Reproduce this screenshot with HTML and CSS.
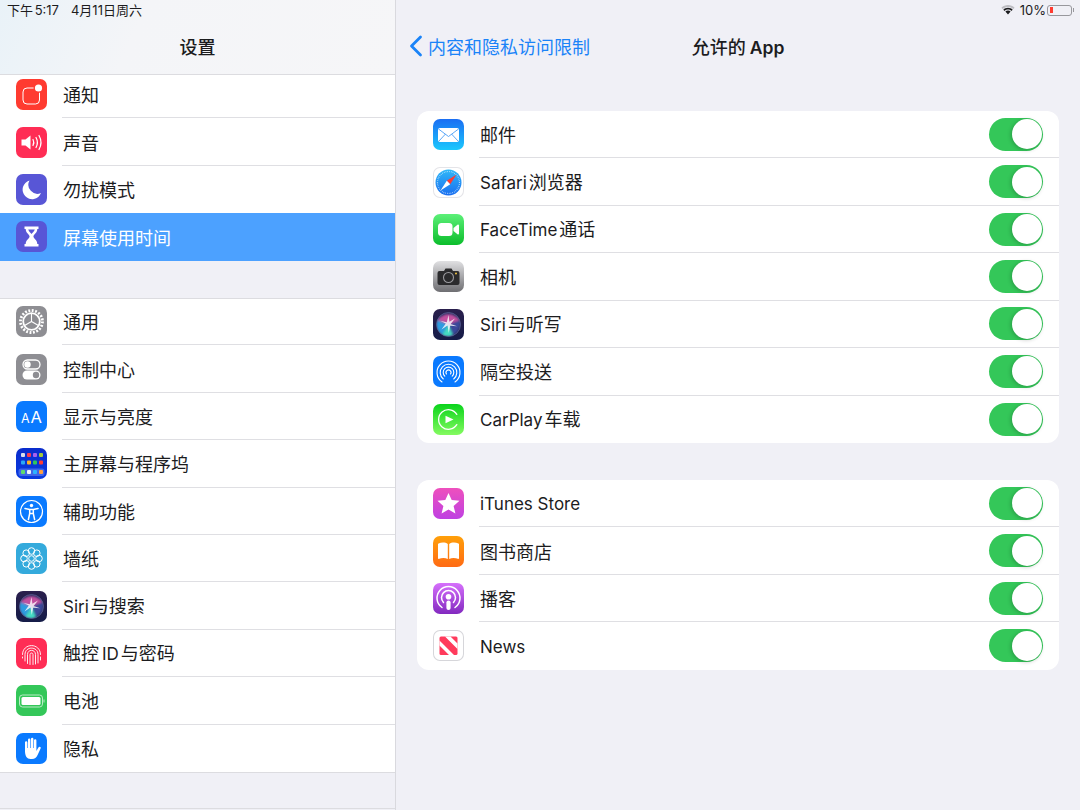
FILE: index.html
```html
<!DOCTYPE html>
<html lang="zh-CN">
<head>
<meta charset="utf-8">
<title>允许的 App</title>
<link rel="stylesheet" href="styles.css">
</head>
<body>
<svg class="defs" aria-hidden="true">
  <defs>
    <filter id="soft" x="-20%" y="-20%" width="140%" height="140%"><feGaussianBlur stdDeviation="1"/></filter>
    <filter id="soft-star" x="-20%" y="-20%" width="140%" height="140%"><feGaussianBlur stdDeviation=".35"/></filter>
    <linearGradient id="saf" x1="0" y1="0" x2="0" y2="1"><stop offset="0" stop-color="#2fb8f8"/><stop offset="1" stop-color="#1a6ef0"/></linearGradient>
    <clipPath id="orb"><circle cx="15.5" cy="15.5" r="12"/></clipPath>
    <symbol id="siri" viewBox="0 0 31 31">
      <circle cx="15.5" cy="15.5" r="12" fill="#2a2f62"/>
      <g clip-path="url(#orb)">
        <g filter="url(#soft)">
          <path d="M4 11Q15.500-.5 27 11L15.500 15.500z" fill="#c2509f"/>
          <path d="M4 11Q1 20 9 26l6.500-10.500z" fill="#2f9be0"/>
          <path d="M9 26q6 3 11 0l-4.500-10.500z" fill="#45dcc4"/>
          <path d="M27 11q2 9-7 15l-4.500-10.500z" fill="#3a4a9a"/>
        </g>
      </g>
      <path d="M15.500 6l.9 6.800L22 9.500l-4.300 5.500 6.500 2.300-7-.5L15.800 24l-1.300-7.500-6 4 4.300-6L7.500 12l6.300 1.300z" fill="#fff" opacity=".8" filter="url(#soft-star)"/>
      <circle cx="15.500" cy="15.500" r="12" fill="none" stroke="#6a70a5" stroke-width=".6"/>
    </symbol>
  </defs>
</svg>
<div class="app">
  <aside class="sidebar">
    <header class="side-head">
      <div class="status status-left"><span class="lt-s">下午 5:17</span><span class="lt-s">4月11日周六</span></div>
      <h1 class="side-title">设置</h1>
    </header>
    <div class="side-clip">
      <ul class="side-list side-list-top">
        <li class="row"><span class="icon bg-red"><svg viewBox="0 0 31 31"><rect x="7" y="9" width="16.500" height="16" rx="4" fill="none" stroke="#fff" stroke-width="1"/><circle cx="22.500" cy="9" r="5" fill="#ff3b30"/><circle cx="22.500" cy="9" r="3.600" fill="#fff"/></svg></span><span class="body"><span class="label">通知</span></span></li>
        <li class="row"><span class="icon bg-pink"><svg viewBox="0 0 31 31"><path d="M5.500 12.500h4l5-4v14l-5-4h-4z" fill="#fff"/><path d="M17 12.500q1.600 3 0 6M20 10.500q2.800 5 0 10M23 8.500q4 7 0 14" fill="none" stroke="#fff" stroke-width="1.200" stroke-linecap="round"/></svg></span><span class="body"><span class="label">声音</span></span></li>
        <li class="row row-last"><span class="icon bg-indigo"><svg viewBox="0 0 31 31"><path d="M13.500 6.500a9.500 9.500 0 1 0 11.500 12.500 9 9 0 0 1-11.500-12.500z" fill="#fff"/></svg></span><span class="body"><span class="label">勿扰模式</span></span></li>
        <li class="row row-last row-active"><span class="icon bg-indigo"><svg viewBox="0 0 31 31"><path d="M8.500 5.500h14v2.500h-1.200c0 4-3.300 5-3.900 7.500.6 2.500 3.900 3.500 3.900 7.500h1.200v2.500h-14V23h1.200c0-4 3.300-5 3.900-7.500C13 13 9.700 12 9.700 8H8.500z" fill="#fff"/><path d="M12.200 8.500h6.600c-.5 2-2.300 3-3.300 4.500-1-1.500-2.800-2.500-3.300-4.500z" fill="#5856d6"/></svg></span><span class="body"><span class="label">屏幕使用时间</span></span></li>
      </ul>
    </div>
    <ul class="side-list side-group">
      <li class="row"><span class="icon bg-gray"><svg viewBox="0 0 31 31"><circle cx="15.500" cy="15.500" r="11" fill="none" stroke="#fff" stroke-width="2.800" stroke-dasharray="1.900 1.550"/><circle cx="15.500" cy="15.500" r="8.300" fill="none" stroke="#fff" stroke-width="1.800"/><path d="M15.500 15.500V8M15.500 15.500l6.500 3.800M15.500 15.500L9 19.300" stroke="#fff" stroke-width="1.100"/></svg></span><span class="body"><span class="label">通用</span></span></li>
      <li class="row"><span class="icon bg-gray"><svg viewBox="0 0 31 31"><rect x="7" y="6" width="17" height="9" rx="4.500" fill="none" stroke="#fff" stroke-width="1.300"/><circle cx="11.500" cy="10.500" r="3.200" fill="#fff"/><rect x="6.500" y="16.500" width="18" height="9" rx="4.500" fill="#fff"/><circle cx="20" cy="21" r="3.200" fill="#8e8e93"/></svg></span><span class="body"><span class="label">控制中心</span></span></li>
      <li class="row"><span class="icon bg-blue"><svg viewBox="0 0 31 31"><text class="aa" x="5" y="21.700" font-size="12.500">A</text><text class="aa" x="14.500" y="21.700" font-size="16.500">A</text></svg></span><span class="body"><span class="label">显示与亮度</span></span></li>
      <li class="row"><span class="icon bg-home"><svg viewBox="0 0 31 31"><rect x="2.500" y="20.500" width="26" height="7.500" rx="2.500" fill="#3f66e8"/><g><rect x="5" y="5" width="4" height="4" rx="1" fill="#d9dde8"/><rect x="11" y="5" width="4" height="4" rx="1" fill="#ff3b4e"/><rect x="17" y="5" width="4" height="4" rx="1" fill="#a860ee"/><rect x="23" y="5" width="4" height="4" rx="1" fill="#a6c93a"/><rect x="5" y="12.500" width="4" height="4" rx="1" fill="#2aa8f5"/><rect x="11" y="12.500" width="4" height="4" rx="1" fill="#ffb020"/><rect x="17" y="12.500" width="4" height="4" rx="1" fill="#30c75a"/><rect x="23" y="12.500" width="4" height="4" rx="1" fill="#ff3b30"/><rect x="5" y="22" width="4" height="4" rx="1" fill="#5fdc6e"/><rect x="11" y="22" width="4" height="4" rx="1" fill="#eef2fb"/><rect x="17" y="22" width="4" height="4" rx="1" fill="#2cb4ff"/><rect x="23" y="22" width="4" height="4" rx="1" fill="#ff9f40"/></g></svg></span><span class="body"><span class="label">主屏幕与程序坞</span></span></li>
      <li class="row"><span class="icon bg-blue"><svg viewBox="0 0 31 31"><circle cx="15.500" cy="15.500" r="11" fill="none" stroke="#fff" stroke-width="1.200"/><circle cx="15.500" cy="9.500" r="1.700" fill="#fff"/><path d="M9 12.500l4.700 1v4l-1.300 6M22 12.500l-4.700 1v4l1.300 6M13.700 13.500h3.600M14 17.500h3" fill="none" stroke="#fff" stroke-width="1.500" stroke-linecap="round" stroke-linejoin="round"/></svg></span><span class="body"><span class="label">辅助功能</span></span></li>
      <li class="row"><span class="icon bg-sky"><svg viewBox="0 0 31 31"><g fill="none" stroke="#fff" stroke-width="1"><circle cx="15.500" cy="15.500" r="2.800"/><circle cx="15.500" cy="8" r="3.300"/><circle cx="15.500" cy="23" r="3.300"/><circle cx="8" cy="15.500" r="3.300"/><circle cx="23" cy="15.500" r="3.300"/><circle cx="10.200" cy="10.200" r="3.300"/><circle cx="20.800" cy="10.200" r="3.300"/><circle cx="10.200" cy="20.800" r="3.300"/><circle cx="20.800" cy="20.800" r="3.300"/></g></svg></span><span class="body"><span class="label">墙纸</span></span></li>
      <li class="row"><span class="icon bg-siri"><svg viewBox="0 0 31 31"><use href="#siri"/></svg></span><span class="body"><span class="label"><span class="lt">Siri</span>与搜索</span></span></li>
      <li class="row"><span class="icon bg-pink"><svg viewBox="0 0 31 31"><g fill="none" stroke="#fff" stroke-width=".9" stroke-linecap="round"><path d="M6.500 16.500c0-12 18-12 18 0M6.500 19v1M24.500 19v3M9 23v-6.500c0-8.500 13-8.500 13 0V25M11.500 25.500v-9c0-5.500 8-5.500 8 0v9.500M14 26.500v-10c0-2 3-2 3 0v10"/></g></svg></span><span class="body"><span class="label">触控<span class="lt lt-mid">ID</span>与密码</span></span></li>
      <li class="row"><span class="icon bg-green"><svg viewBox="0 0 31 31"><rect x="3.500" y="10" width="23" height="12" rx="3" fill="none" stroke="#b9ecc6" stroke-width="1"/><rect x="5.500" y="12" width="19" height="8" rx="1.500" fill="#fff"/><rect x="27.500" y="14.500" width="1" height="3" fill="#b9ecc6"/></svg></span><span class="body"><span class="label">电池</span></span></li>
      <li class="row row-last"><span class="icon bg-blue"><svg viewBox="0 0 31 31"><path d="M9 18V9.500a1.200 1.200 0 0 1 2.400 0V15h.6V6.800a1.200 1.200 0 0 1 2.400 0V15h.6V6a1.200 1.200 0 0 1 2.400 0v9h.6V7.500a1.200 1.200 0 0 1 2.400 0V18l2-3.500c1-1.500 3-.6 2.200 1l-3 6.500c-1.200 2.600-2.800 4-5.600 4h-1.500C11 26 9 23 9 18z" fill="#fff"/></svg></span><span class="body"><span class="label">隐私</span></span></li>
    </ul>
    <div class="side-foot"></div>
  </aside>

  <main class="main">
    <div class="status status-right">
      <svg class="wifi" viewBox="0 0 14 10"><path d="M7 0C4.400 0 2.100 1 .4 2.700l1.300 1.400C3.100 2.700 5 1.900 7 1.900s3.900.8 5.300 2.200l1.300-1.400C11.900 1 9.600 0 7 0z" fill="#bdbdc2"/><path d="M7 2.800c-1.800 0-3.500.7-4.700 1.900l1.300 1.300C4.500 5.100 5.700 4.600 7 4.600s2.500.5 3.400 1.400l1.300-1.300C10.500 3.500 8.800 2.800 7 2.800zM7 5.500c-1 0-1.900.4-2.600 1.100L7 9.400l2.600-2.800C8.900 5.900 8 5.500 7 5.500z" fill="#1c1c1e"/></svg>
      <span class="pct">10%</span>
      <span class="battery"><span class="battery-fill"></span></span><span class="battery-tip"></span>
    </div>
    <nav class="nav">
      <a class="back"><svg class="chev" viewBox="0 0 14 22"><path d="M11.500 2L2.500 11l9 9" fill="none" stroke="#1a83f8" stroke-width="2.800" stroke-linecap="round" stroke-linejoin="round"/></svg>内容和隐私访问限制</a>
      <h2 class="nav-title">允许的 <span class="lt-b">App</span></h2>
    </nav>
    <div class="content">
      <ul class="card">
        <li class="row"><span class="icon bg-mail"><svg viewBox="0 0 31 31"><rect x="5" y="9" width="21" height="14" rx="2" fill="#fff"/><path d="M5.500 10l10 7.500 10-7.500M5.500 22.500l7-7.500M25.500 22.500l-7-7.500" fill="none" stroke="#4a9df5" stroke-width=".9"/></svg></span><span class="body"><span class="label">邮件</span><span class="switch"></span></span></li>
        <li class="row"><span class="icon bg-white"><svg viewBox="0 0 31 31"><circle cx="15.500" cy="15.500" r="13" fill="url(#saf)"/><circle cx="15.500" cy="15.500" r="11" fill="none" stroke="#d6ecff" stroke-width="1.200" stroke-dasharray=".6 1.200"/><path d="M23.500 7.500l-9.700 6.300 3.400 3.400z" fill="#ff3b30"/><path d="M7.500 23.500l6.300-9.700 3.400 3.400z" fill="#fff"/></svg></span><span class="body"><span class="label"><span class="lt">Safari</span>浏览器</span><span class="switch"></span></span></li>
        <li class="row"><span class="icon bg-facetime"><svg viewBox="0 0 31 31"><rect x="5" y="9" width="14.500" height="13" rx="3.500" fill="#fff"/><path d="M20.500 14l4-3.300c.7-.5 1.500-.1 1.500.7v8.200c0 .8-.8 1.200-1.500.7l-4-3.300z" fill="#fff"/></svg></span><span class="body"><span class="label"><span class="lt">FaceTime</span>通话</span><span class="switch"></span></span></li>
        <li class="row"><span class="icon bg-camera"><svg viewBox="0 0 31 31"><path d="M6.500 10h4.500l1.500-2.500h6L20 10h4.500a2 2 0 0 1 2 2v10a2 2 0 0 1-2 2h-18a2 2 0 0 1-2-2V12a2 2 0 0 1 2-2z" fill="#2b2b2d"/><circle cx="15.500" cy="16.500" r="5" fill="none" stroke="#9a9a9e" stroke-width="1.100"/><circle cx="23" cy="12.500" r="1" fill="#f5c542"/></svg></span><span class="body"><span class="label">相机</span><span class="switch"></span></span></li>
        <li class="row"><span class="icon bg-siri"><svg viewBox="0 0 31 31"><use href="#siri"/></svg></span><span class="body"><span class="label"><span class="lt">Siri</span>与听写</span><span class="switch"></span></span></li>
        <li class="row"><span class="icon bg-blue"><svg viewBox="0 0 31 31"><g fill="none" stroke="#fff" stroke-width="1.100" stroke-linecap="round"><path d="M9 26a11.500 11.500 0 1 1 13 0"/><path d="M10.300 23a8.300 8.300 0 1 1 10.400 0"/><path d="M11.800 20.200a5.300 5.300 0 1 1 7.400 0"/><path d="M13.500 18a2.500 2.500 0 1 1 4 0"/></g></svg></span><span class="body"><span class="label">隔空投送</span><span class="switch"></span></span></li>
        <li class="row row-last"><span class="icon bg-carplay"><svg viewBox="0 0 31 31"><path d="M23.800 20.600a9.800 9.800 0 1 1 0-10.200" fill="none" stroke="#fff" stroke-width="1.300" stroke-linecap="round"/><path d="M12.500 11.800l8 3.700-8 3.700z" fill="#fff"/></svg></span><span class="body"><span class="label"><span class="lt">CarPlay</span>车载</span><span class="switch"></span></span></li>
      </ul>
      <ul class="card">
        <li class="row"><span class="icon bg-itunes"><svg viewBox="0 0 31 31"><path d="M15.500 5l3.200 7 7.800.8-5.900 5.100 1.800 7.600-6.900-4-6.900 4 1.800-7.600-5.900-5.100 7.800-.8z" fill="#fff"/></svg></span><span class="body"><span class="label"><span class="lt">iTunes Store</span></span><span class="switch"></span></span></li>
        <li class="row"><span class="icon bg-books"><svg viewBox="0 0 31 31"><path d="M5.500 7.500c3.200-1.300 6.800-1.300 9.300.5v15c-2.500-1.400-6-1.400-9.300 0a1 1 0 0 1-.5-1V8.500a1 1 0 0 1 .5-1zM25.500 7.500c-3.200-1.300-6.800-1.300-9.300.5v15c2.500-1.400 6-1.400 9.300 0a1 1 0 0 0 .5-1V8.500a1 1 0 0 0-.5-1z" fill="#fff"/></svg></span><span class="body"><span class="label">图书商店</span><span class="switch"></span></span></li>
        <li class="row"><span class="icon bg-podcast"><svg viewBox="0 0 31 31"><g fill="none" stroke="#fff" stroke-width="1.500" stroke-linecap="round"><path d="M9 24.500a11.500 11.500 0 1 1 13 0"/><path d="M10.500 19.500a7 7 0 1 1 10 0"/></g><circle cx="15.500" cy="13.800" r="2.800" fill="#fff"/><rect x="13.400" y="17.500" width="4.200" height="9.500" rx="2.100" fill="#fff"/></svg></span><span class="body"><span class="label">播客</span><span class="switch"></span></span></li>
        <li class="row row-last"><span class="icon bg-news"><svg viewBox="0 0 31 31"><rect x="6.500" y="6.500" width="18" height="18.500" rx="1.500" fill="#ff3b5c"/><path d="M6.500 10.500v5l9.500 9.500h5zM12 6.500h5.500l7 7v5.500z" fill="#fff"/></svg></span><span class="body"><span class="label"><span class="lt">News</span></span><span class="switch"></span></span></li>
      </ul>
    </div>
  </main>
</div>
</body>
</html>
```

FILE: styles.css
```css
* { box-sizing: border-box; }
html, body { margin: 0; padding: 0; }
body {
  width: 1080px;
  height: 810px;
  overflow: hidden;
  background: #f0f0f6;
  color: #1c1c1e;
  font-family: "Noto Sans CJK SC", "Inter", sans-serif;
  font-size: 18px;
}
ul { list-style: none; margin: 0; padding: 0; }
h1, h2 { margin: 0; font-size: 18px; font-weight: 500; }
.defs { width: 0; height: 0; overflow: hidden; display: block; }

.app { display: flex; height: 810px; }

/* sidebar */
.sidebar {
  width: 396px;
  flex: none;
  display: flex;
  flex-direction: column;
  border-right: 1px solid #d9d9de;
}
.side-head {
  height: 75px;
  flex: none;
  display: flex;
  flex-direction: column;
  background: linear-gradient(115deg, #e9f2f8 0%, #f4f5f8 35%, #f6f6f8 100%);
  border-bottom: 1px solid #dcdce0;
}
.status { height: 20px; flex: none; display: flex; align-items: center; font-size: 13px; line-height: 20px; }
.status-left { padding-left: 7px; gap: 12px; word-spacing: -2px; }
.lt-s { font-family: "Inter", "Noto Sans CJK SC", sans-serif; }
.side-title { flex: 1; display: flex; align-items: center; justify-content: center; padding-bottom: 2px; }
.side-clip { height: 186px; overflow: hidden; background: #fff; flex: none; }
.side-list-top { margin-top: -4px; }
.side-group {
  margin-top: 37px;
  background: #fff;
  box-shadow: inset 0 1px #dcdce0, 0 1px #dcdce0;
  flex: none;
}
.side-foot { flex: 1; border-bottom: 1px solid #dcdce0; margin-bottom: 1px; }

/* rows */
.row { height: 47.4px; display: flex; align-items: stretch; padding-left: 16px; }
.icon {
  width: 31px;
  height: 31px;
  flex: none;
  align-self: center;
  border-radius: 7px;
  overflow: hidden;
  display: block;
}
.icon svg { display: block; width: 31px; height: 31px; }
.body {
  flex: 1;
  min-width: 0;
  margin-left: 15px;
  display: flex;
  align-items: center;
  justify-content: space-between;
  border-bottom: 1px solid #dfdfe3;
  padding-right: 16px;
}
.row-last .body { border-bottom: 0; }
.label { white-space: nowrap; line-height: 24px; padding-left: 1px; }
.lt { font-family: "Inter", "Noto Sans CJK SC", sans-serif; font-size: 17px; margin-right: 2px; }
.lt-mid { margin-left: 3px; }
.row-active { background: #4ca1ff; color: #fff; }

/* main */
.main { flex: 1; min-width: 0; display: flex; flex-direction: column; }
.status-right { justify-content: flex-end; padding-right: 6px; }
.wifi { width: 14px; height: 10px; margin-right: 5px; }
.pct { font-family: "Inter", sans-serif; font-size: 13px; margin-right: 1px; }
.battery {
  width: 25px;
  height: 11px;
  border: 1px solid #98989d;
  border-radius: 3px;
  padding: 1.5px;
  display: block;
}
.battery-fill { display: block; width: 3px; height: 100%; background: #ff3b30; }
.battery-tip { width: 1px; height: 4px; background: #98989d; margin-left: 1px; }
.nav {
  height: 54px;
  flex: none;
  display: grid;
  grid-template-columns: 1fr auto 1fr;
  align-items: center;
  padding-bottom: 2px;
}
.back {
  display: flex;
  align-items: center;
  padding-left: 13px;
  color: #1a83f8;
  white-space: nowrap;
}
.chev { width: 14px; height: 22px; margin-right: 5px; flex: none; }
.nav-title { grid-column: 2; white-space: nowrap; }
.lt-b { font-family: "Inter", sans-serif; font-weight: 600; font-size: 17.5px; }
.content { padding: 37px 21px 0; display: flex; flex-direction: column; gap: 37px; }
.card { background: #fff; border-radius: 12px; overflow: hidden; }
.card .row { height: 47.43px; }
.switch {
  width: 54px;
  height: 33px;
  flex: none;
  border-radius: 17px;
  background: #34c759;
  position: relative;
}
.switch::after {
  content: "";
  position: absolute;
  right: 1.5px;
  top: 1.5px;
  width: 30px;
  height: 30px;
  border-radius: 50%;
  background: #fff;
  box-shadow: -1px 1px 4px rgba(0,0,0,.22);
}

/* icon backgrounds */
.bg-red { background: #ff3b30; }
.bg-pink { background: #ff2d55; }
.bg-indigo { background: #5856d6; }
.bg-gray { background: #8e8e93; }
.bg-blue { background: #0a7aff; }
.bg-sky { background: #34aadc; }
.bg-green { background: #34c759; }
.bg-home { background: linear-gradient(#0a2ccc, #0a3be0); }
.bg-siri { background: linear-gradient(#2a1f4d, #151c48); }
.bg-mail { background: linear-gradient(#1b6ef3, #1bc8fd); }
.bg-white { background: #fff; box-shadow: inset 0 0 0 1px #e4e4e8; }
.bg-facetime { background: linear-gradient(#5cf078, #0bbd2b); }
.bg-camera { background: linear-gradient(#e0e0e2, #6e6e72); }
.bg-carplay { background: linear-gradient(#0ad41c, #84fb60); }
.bg-itunes { background: linear-gradient(#ee50bd, #bf40e2); }
.bg-books { background: linear-gradient(#ffa00a, #ff6a14); }
.bg-podcast { background: linear-gradient(#d670fc, #8229bf); }
.bg-news { background: #fff; box-shadow: inset 0 0 0 1px #d6d6da; }
.aa { fill: #fff; font-family: "Inter", sans-serif; }
```
